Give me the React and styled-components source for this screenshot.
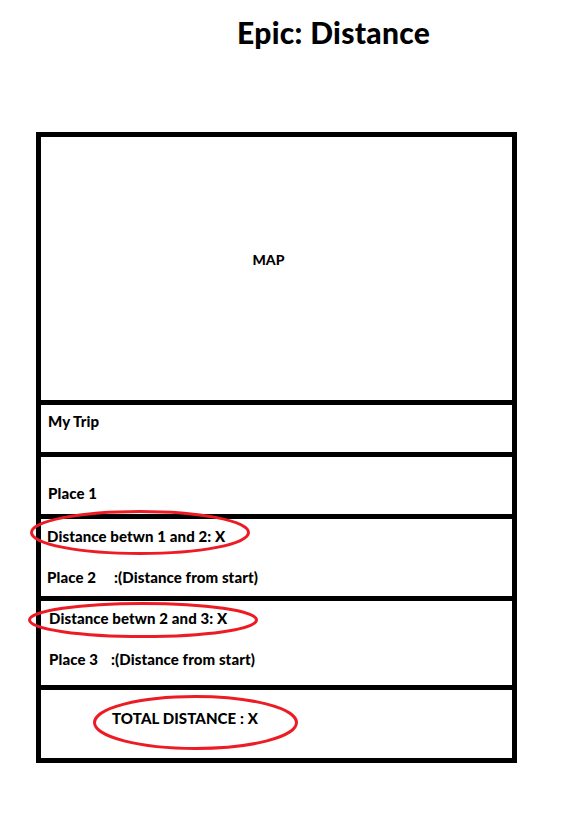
import React from "react";
import styled, { createGlobalStyle } from "styled-components";

const GlobalStyle = createGlobalStyle`
	body {
		margin: 0;
		background: #ffffff;
		font-family: Lato, "Open Sans", sans-serif;
		color: #000000;
	}
`;

const Page = styled.div`
	width: 586px;
	height: 820px;
	display: flex;
	flex-direction: column;
	padding-top: 14px;
	box-sizing: border-box;
`;

const Title = styled.h1`
	margin: 0 0 0 237px;
	font-size: 30px;
	line-height: 37px;
	font-weight: 900;
	letter-spacing: 0.3px;
`;

const Frame = styled.div`
	margin: 81px 0 0 36px;
	width: 481px;
	box-sizing: border-box;
	border: 5px solid #000;
	display: flex;
	flex-direction: column;
`;

const Section = styled.div`
	position: relative;
	height: ${(p) => p.$h}px;
	border-bottom: ${(p) => (p.$last ? "none" : "5px solid #000")};
	box-sizing: content-box;
	display: flex;
	flex-direction: column;
	align-items: ${(p) => (p.$center ? "center" : "flex-start")};
	justify-content: ${(p) => (p.$center ? "center" : "flex-start")};
`;

const Label = styled.div`
	font-size: ${(p) => p.$size || 15}px;
	line-height: 18px;
	font-weight: 900;
	letter-spacing: 0.1px;
	margin: ${(p) => p.$m || "0"};
	display: flex;
	gap: ${(p) => p.$gap || 0}px;
	white-space: nowrap;
`;

const Ring = styled.svg`
	position: absolute;
	left: ${(p) => p.$x}px;
	top: ${(p) => p.$y}px;
	overflow: visible;
	pointer-events: none;
	z-index: 2;
`;

function Circle({ x, y, w, h }) {
	return (
		<Ring $x={x} $y={y} width={w} height={h}>
			<ellipse
				cx={w / 2}
				cy={h / 2}
				rx={w / 2 - 1.5}
				ry={h / 2 - 1.5}
				fill="none"
				stroke="#ed1c24"
				strokeWidth="3"
			/>
		</Ring>
	);
}

export default function App() {
	return (
		<Page>
			<GlobalStyle />
			<Title>Epic: Distance</Title>
			<Frame>
				<Section $h={263} $center>
					<Label $size={14} $m="-18px 16px 0 0">MAP</Label>
				</Section>
				<Section $h={47}>
					<Label $m="7px 0 0 7px">My Trip</Label>
				</Section>
				<Section $h={57}>
					<Label $m="27px 0 0 7px">Place 1</Label>
				</Section>
				<Section $h={77}>
					<Circle x={-11} y={-9} w={220} h={45} />
					<Label $m="8px 0 0 6px">Distance betwn 1 and 2: X</Label>
					<Label $m="23px 0 0 6px" $gap={18}>
						<span>Place 2</span>
						<span>:(Distance from start)</span>
					</Label>
				</Section>
				<Section $h={84}>
					<Circle x={-13} y={1} w={230} h={36} />
					<Label $m="8px 0 0 8px">Distance betwn 2 and 3: X</Label>
					<Label $m="23px 0 0 8px" $gap={13}>
						<span>Place 3</span>
						<span>:(Distance from start)</span>
					</Label>
				</Section>
				<Section $h={68} $last>
					<Circle x={52} y={5} w={205} h={55} />
					<Label $m="19px 0 0 71px">TOTAL DISTANCE : X</Label>
				</Section>
			</Frame>
		</Page>
	);
}
